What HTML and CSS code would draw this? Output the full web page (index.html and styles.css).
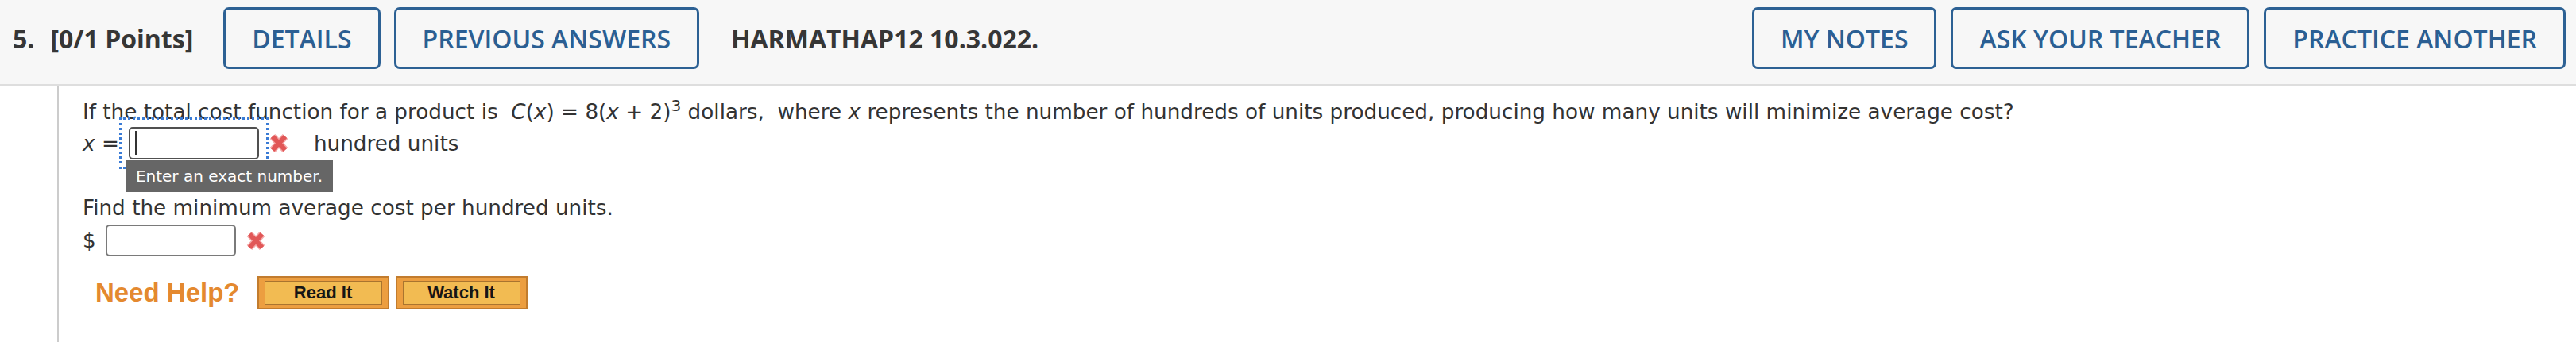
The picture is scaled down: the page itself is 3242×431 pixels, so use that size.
FILE: index.html
```html
<!DOCTYPE html>
<html lang="en">
<head>
<meta charset="utf-8">
<title>Question 5</title>
<link rel="stylesheet" href="styles.css">
</head>
<body>
<div class="question">
  <header class="q-header">
    <div class="q-title"><span class="q-num">5.</span><span class="q-points">[0/1 Points]</span></div>
    <div class="q-actions">
      <button class="q-btn" type="button">DETAILS</button>
      <button class="q-btn" type="button">PREVIOUS ANSWERS</button>
    </div>
    <div class="q-code">HARMATHAP12 10.3.022.</div>
    <div class="q-actions q-actions-right">
      <button class="q-btn" type="button">MY NOTES</button>
      <button class="q-btn" type="button">ASK YOUR TEACHER</button>
      <button class="q-btn" type="button">PRACTICE ANOTHER</button>
    </div>
  </header>
  <div class="q-body">
    <div class="q-gutter"></div>
    <div class="q-content">
      <p class="line">If the total cost function for a product is&nbsp; <i>C</i>(<i>x</i>) = 8(<i>x</i> + 2)<sup>3</sup> dollars,&nbsp; where <i>x</i> represents the number of hundreds of units produced, producing how many units will minimize average cost?</p>
      <div class="answer-row">
        <span class="var"><i>x</i> =</span>
        <span class="focus-box">
          <input class="answer-input is-focused" type="text" aria-label="x">
          <span class="caret"></span>
          <span class="tooltip">Enter an exact number.</span>
        </span>
        <svg class="mark" viewBox="0 0 26 27" width="26" height="27" aria-hidden="true">
          <path d="M5 5 L21 22 M21 5 L5 22" stroke="#f4a9a9" stroke-width="9" fill="none"/>
          <path d="M5 5 L21 22 M21 5 L5 22" stroke="#e15757" stroke-width="6" fill="none"/>
        </svg>
        <span class="unit">hundred units</span>
      </div>
      <p class="line line-find">Find the minimum average cost per hundred units.</p>
      <div class="answer-row row-dollar">
        <span class="var">$</span>
        <input class="answer-input" type="text" aria-label="cost">
        <svg class="mark" viewBox="0 0 26 27" width="26" height="27" aria-hidden="true">
          <path d="M5 5 L21 22 M21 5 L5 22" stroke="#f4a9a9" stroke-width="9" fill="none"/>
          <path d="M5 5 L21 22 M21 5 L5 22" stroke="#e15757" stroke-width="6" fill="none"/>
        </svg>
      </div>
      <div class="help-row">
        <span class="need-help">Need Help?</span>
        <button class="help-btn" type="button"><span class="help-btn-inner">Read It</span></button>
        <button class="help-btn" type="button"><span class="help-btn-inner">Watch It</span></button>
      </div>
    </div>
  </div>
</div>
</body>
</html>
```

FILE: styles.css
```css
html, body {
  margin: 0;
  padding: 0;
  background: #ffffff;
}

body {
  width: 3242px;
  height: 431px;
  overflow: hidden;
}

.q-header {
  display: flex;
  align-items: center;
  box-sizing: border-box;
  height: 108px;
  padding: 9px 13px 19px 16px;
  background: #f7f7f7;
  border-bottom: 2px solid #dedede;
  font-family: "Open Sans", "Liberation Sans", sans-serif;
}

.q-title {
  font-size: 32px;
  font-weight: 700;
  color: #363636;
  white-space: nowrap;
}

.q-points {
  margin-left: 20px;
}

.q-actions {
  display: flex;
  gap: 17px;
  margin-left: 38px;
}

.q-actions-right {
  margin-left: auto;
  gap: 18px;
}

.q-btn {
  box-sizing: border-box;
  height: 78px;
  margin: 0;
  padding: 0 33px;
  border: 3px solid #2d6194;
  border-radius: 7px;
  background: transparent;
  color: #2b5f93;
  font-family: "Open Sans", "Liberation Sans", sans-serif;
  font-size: 32px;
  font-weight: 600;
  white-space: nowrap;
}

.q-code {
  margin-left: 40px;
  font-size: 32px;
  font-weight: 700;
  color: #363636;
  white-space: nowrap;
}

.q-body {
  display: flex;
  height: 323px;
}

.q-gutter {
  flex: none;
  width: 72px;
  border-right: 2px solid #cccccc;
}

.q-content {
  padding: 15px 0 0 30px;
  font-family: "DejaVu Sans", Verdana, sans-serif;
  font-size: 26.25px;
  color: #333333;
}

.line {
  margin: 0;
  line-height: 37px;
  white-space: nowrap;
}

.line sup {
  font-size: 20px;
  line-height: 0;
  vertical-align: 10px;
}

.line-find {
  margin-top: 43px;
}

.answer-row {
  display: flex;
  align-items: center;
  height: 41px;
  white-space: nowrap;
}

.row-dollar {
  height: 40px;
  margin-top: 2px;
}

.focus-box {
  position: relative;
  display: flex;
  padding: 9px;
  margin: -12px 0 -12px 0;
  border: 3px dotted #3a7bd5;
}

.answer-input {
  box-sizing: border-box;
  width: 164px;
  height: 40px;
  margin: 0;
  padding: 0;
  border: 2px solid #7a7a7a;
  border-radius: 5px;
  background: #ffffff;
  outline: none;
}

.answer-input.is-focused {
  height: 41px;
  border-color: #505050;
}

.row-dollar .answer-input {
  margin-left: 12px;
}

.row-dollar .mark {
  margin-left: 12px;
}

.caret {
  position: absolute;
  left: 17px;
  top: 14px;
  width: 2px;
  height: 30px;
  background: #333333;
}

.tooltip {
  position: absolute;
  left: 6px;
  top: 51px;
  z-index: 2;
  box-sizing: border-box;
  width: 260px;
  height: 40px;
  padding: 0 12px;
  background: #666666;
  color: #ffffff;
  font-size: 20px;
  line-height: 40px;
  white-space: nowrap;
}

.mark {
  flex: none;
  display: block;
}

.unit {
  margin-left: 31px;
}

.help-row {
  display: flex;
  align-items: center;
  height: 42px;
  margin-top: 25px;
}

.need-help {
  margin-left: 16px;
  margin-right: 22px;
  font-family: "Liberation Sans", Arial, sans-serif;
  font-size: 33px;
  font-weight: 700;
  color: #e4892f;
}

.help-btn {
  box-sizing: border-box;
  display: flex;
  width: 166px;
  height: 42px;
  margin: 0 8px 0 0;
  padding: 4px 7px;
  border: 2px solid #c27c2e;
  background: #ec9e40;
  cursor: pointer;
}

.help-btn-inner {
  display: flex;
  flex: 1;
  align-items: center;
  justify-content: center;
  border: 1px solid #a9742f;
  background: #f2bb52;
  color: #161616;
  font-family: "Liberation Sans", Arial, sans-serif;
  font-size: 22px;
  font-weight: 700;
}
```
